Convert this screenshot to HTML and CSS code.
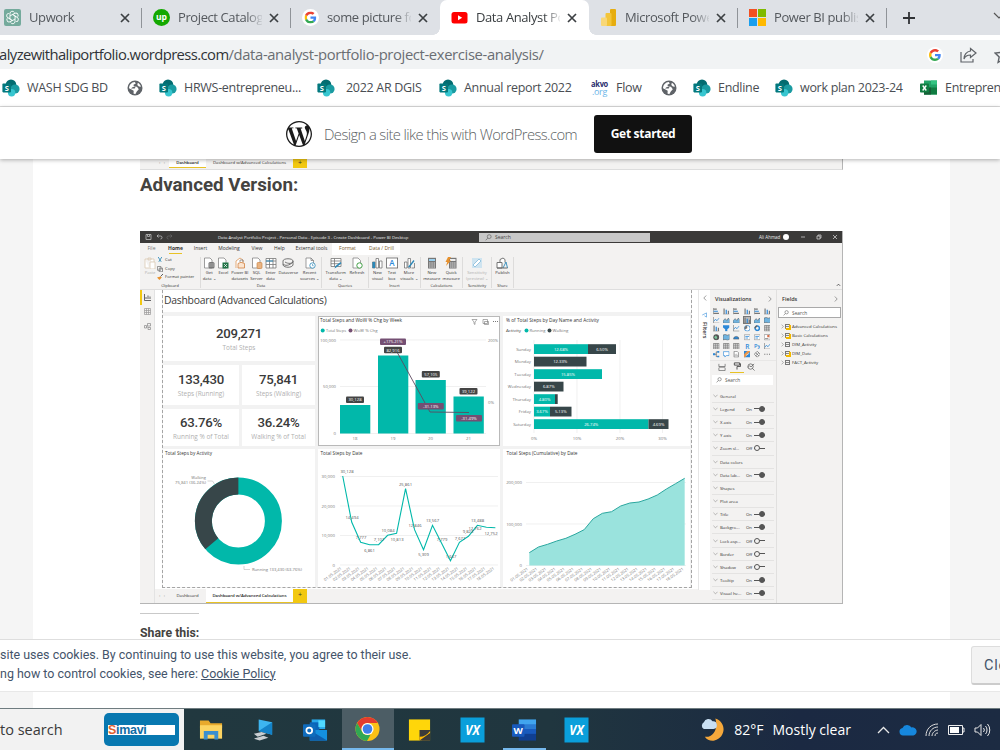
FILE: index.html
```html
<!DOCTYPE html>
<html lang="en">
<head>
    <meta charset="UTF-8">
    <meta name="viewport" content="width=device-width, initial-scale=1.0">
    <title>Data Analyst Portfolio Project</title>
    <link rel="stylesheet" href="styles.css">
</head>
<body>
    <svg class="defs" width="0" height="0">
        <symbol id="google" viewBox="0 0 48 48">
            <path fill="#ea4335" d="M24 9.5c3.54 0 6.71 1.22 9.21 3.6l6.85-6.85C35.9 2.38 30.47 0 24 0 14.62 0 6.51 5.38 2.56 13.22l7.98 6.19C12.43 13.72 17.74 9.5 24 9.5z"/>
            <path fill="#4285f4" d="M46.98 24.55c0-1.57-.15-3.09-.38-4.55H24v9.02h12.94c-.58 2.96-2.26 5.48-4.78 7.18l7.73 6c4.51-4.18 7.09-10.36 7.09-17.65z"/>
            <path fill="#fbbc05" d="M10.53 28.59c-.48-1.45-.76-2.99-.76-4.59s.27-3.14.76-4.59l-7.98-6.19C.92 16.46 0 20.12 0 24c0 3.88.92 7.54 2.56 10.78l7.97-6.19z"/>
            <path fill="#34a853" d="M24 48c6.48 0 11.93-2.13 15.89-5.81l-7.73-6c-2.15 1.45-4.92 2.3-8.16 2.3-6.26 0-11.57-4.22-13.47-9.91l-7.98 6.19C6.51 42.62 14.62 48 24 48z"/>
        </symbol>
        <symbol id="sharepoint" viewBox="0 0 18 18">
            <circle cx="9" cy="5.8" r="5.3" fill="#036c70"/>
            <circle cx="13" cy="10" r="4.6" fill="#1a9ba1"/>
            <circle cx="9.6" cy="13.8" r="3.7" fill="#37c6d0"/>
            <rect x="0.4" y="4.6" width="8.6" height="8.8" rx="0.8" fill="#03787c"/>
            <text x="4.7" y="11.6" text-anchor="middle" class="glyph" font-size="7.5">S</text>
        </symbol>
        <symbol id="globe" viewBox="0 0 16 16">
            <circle cx="8" cy="8" r="7.5" fill="#5f6368"/>
            <path fill="#fff" d="M2 8.200C2.200 4.800 4.500 2.300 7.800 2l1 1.500-2.300 1.300.3 1.700 3.200.2 1.800 2.500-2 2.300-1.500 2.700-1.800-.8.2-2.600-2.200-1.300z"/>
            <path fill="#5f6368" d="M4 8.500c1-1.500 2.500-2 4.500-1.200l-.8 1.200H5.500z"/>
            <path fill="#fff" d="M10.800 2.800c1.700.9 2.700 2.200 3.100 4l-2-.3-1.600-1.600z"/>
        </symbol>
        <symbol id="close" viewBox="0 0 10 10"><path d="M1 1l8 8M9 1l-8 8" stroke="#3c4043" stroke-width="1.700"/></symbol>
        <symbol id="chev-down" viewBox="0 0 6 4"><path d="M.5.5L3 3 5.500.5" fill="none" stroke="#777" stroke-width=".6"/></symbol>
        <symbol id="chev-right" viewBox="0 0 4 6"><path d="M.8.5L3.200 3 .8 5.500" fill="none" stroke="#777" stroke-width=".7"/></symbol>
        <symbol id="chev-left" viewBox="0 0 4 6"><path d="M3.200.5L.8 3l2.400 2.500" fill="none" stroke="#777" stroke-width=".7"/></symbol>
        <symbol id="lens" viewBox="0 0 8 8"><circle cx="4.800" cy="3" r="2.200" fill="none" stroke="#666" stroke-width=".8"/><path d="M3.200 4.700L.8 7.200" stroke="#666" stroke-width=".8"/></symbol>

        <!-- ribbon icons, 12 x 12 -->
        <symbol id="r-paste" viewBox="0 0 12 12"><path d="M1 2h9v3M1 2v9h4M6 5h5v7H6zM4 1h3v2H4z" fill="#fff" stroke="#d9c9b4" stroke-width=".8"/></symbol>
        <symbol id="r-get" viewBox="0 0 12 12"><path d="M1.500 1h5.500l2 2v8h-7.500z" fill="#fff" stroke="#777" stroke-width=".7"/><rect x="5.500" y="5" width="6" height="6.500" rx="1.500" fill="#777"/><path d="M6 7h5M6 9h5" stroke="#ddd" stroke-width=".5"/></symbol>
        <symbol id="r-excel" viewBox="0 0 12 12"><path d="M1.500 1h5.500l2 2v8h-7.500z" fill="#fff" stroke="#777" stroke-width=".7"/><rect x="5.500" y="5.500" width="6" height="6" fill="#217346"/><path d="M7 7l3 3M10 7l-3 3" stroke="#fff" stroke-width=".7"/></symbol>
        <symbol id="r-cube" viewBox="0 0 12 12"><path d="M2 11V4l4-3 3 2v3" fill="#fff" stroke="#e3a36b" stroke-width=".9"/><path d="M4 6.500l3-1.200 3.500 1.200V11H4z" fill="#fbe4cf" stroke="#d18241" stroke-width=".8"/><path d="M6 5V3h3v2" fill="none" stroke="#777" stroke-width=".7"/></symbol>
        <symbol id="r-sql" viewBox="0 0 12 12"><path d="M1.500 1h5.500l2 2v8h-7.500z" fill="#fff" stroke="#777" stroke-width=".7"/><rect x="6" y="5.500" width="5" height="6" rx="1" fill="#e9b483" stroke="#c77c35" stroke-width=".6"/></symbol>
        <symbol id="r-grid" viewBox="0 0 12 12"><path d="M1 1.500h10v9.500H1zM1 4h10M1 7.500h10M4.500 1.500V11M8 1.500V11" fill="#fff" stroke="#777" stroke-width=".8"/><path d="M1 4h7" stroke="#2b88b8" stroke-width="1"/></symbol>
        <symbol id="r-verse" viewBox="0 0 12 12"><path d="M1 4C1 1 11 1 11 4S6 7 3 5 M1 4v4c1 3 9 3 10 0V4M1 7c2 2 6 2 10-2" fill="none" stroke="#666" stroke-width=".9"/></symbol>
        <symbol id="r-doc" viewBox="0 0 12 12"><path d="M2 1h5l2.500 2.500V11H2zM7 1v2.500h2.500" fill="#fff" stroke="#777" stroke-width=".7"/><circle cx="8.500" cy="8.500" r="2.700" fill="#fff" stroke="#2b88b8" stroke-width=".8"/><path d="M8.500 7v1.700h1.200" fill="none" stroke="#2b88b8" stroke-width=".6"/></symbol>
        <symbol id="r-trans" viewBox="0 0 12 12"><path d="M1 1.500h10v8H1zM1 4h10M1 6.700h10M4.500 1.500v8" fill="#fff" stroke="#777" stroke-width=".8"/><path d="M4.500 11.500l1-2.500 5-4 1 1.200-5 4z" fill="#2b88b8"/></symbol>
        <symbol id="r-refresh" viewBox="0 0 12 12"><path d="M2 1h5l2.500 2.500V11H2z" fill="#fff" stroke="#777" stroke-width=".7"/><circle cx="8.500" cy="8.500" r="2.700" fill="#fff" stroke="#43a047" stroke-width="1"/></symbol>
        <symbol id="r-bars" viewBox="0 0 12 12"><path d="M1.500 11V5h2.500v6zM5 11V1.500h2.500V11zM8.500 11V4H11v7z" fill="#fff" stroke="#666" stroke-width=".7"/><path d="M1.500 11V5h2.500v6z" fill="#2b88b8"/></symbol>
        <symbol id="r-text" viewBox="0 0 12 12"><rect x=".6" y="1" width="11" height="10" fill="#fff" stroke="#666" stroke-width=".8"/><text x="6" y="9" text-anchor="middle" font-size="8" class="blue-glyph">A</text></symbol>
        <symbol id="r-more" viewBox="0 0 12 12"><path d="M1.500 11V5h2.500v6zM5 11V1.500h2.500V11z" fill="#fff" stroke="#666" stroke-width=".7"/><path d="M5 10l5.500-7 1 1-5 6.500z" fill="#2b88b8"/><path d="M8.500 11h3V6" fill="none" stroke="#666" stroke-width=".7"/></symbol>
        <symbol id="r-calc" viewBox="0 0 12 12"><path d="M2 .8h8v10.700H2z" fill="#777"/><path d="M3 2h6v2H3z" fill="#9cd1ef"/><path d="M3.200 6h5.800M3.200 8h5.800M3.200 10h5.800" stroke="#fff" stroke-width=".9" stroke-dasharray="1.300 .9"/></symbol>
        <symbol id="r-quick" viewBox="0 0 12 12"><path d="M4 .8h7.500v10.700H4z" fill="#777"/><path d="M5 2h5.500v2H5z" fill="#eee"/><path d="M5.200 6h5.300M5.200 8h5.300M5.200 10h5.300" stroke="#fff" stroke-width=".9" stroke-dasharray="1.300 .7"/><path d="M3 0h3L4 3.500h2L1 9l1.300-4H.5z" fill="#e8912d"/></symbol>
        <symbol id="r-sens" viewBox="0 0 12 12"><path d="M1 1h10v10H1z" fill="#cfe4f0"/><path d="M2 8l6-6 2 2-6 6z" fill="#fff" stroke="#8fc0dc" stroke-width=".9"/></symbol>
        <symbol id="r-pub" viewBox="0 0 12 12"><path d="M1 5.500h5V11H1zM4 5.500V2.500L7 1l2 1.500v3" fill="#fff" stroke="#666" stroke-width=".9"/><path d="M7 11l3-6 1.500 6" fill="none" stroke="#2b88b8" stroke-width=".9"/><path d="M1 11h10.500" stroke="#666"/></symbol>

        <!-- visual picker icons, 6 x 6 -->
        <symbol id="v-hbar" viewBox="0 0 6 6"><path d="M.3 0v6" stroke="#555" stroke-width=".5"/><path d="M.5 1h3M.5 5h5" stroke="#777" stroke-width="1.100"/><path d="M.5 3h4" stroke="#2b88d8" stroke-width="1.100"/></symbol>
        <symbol id="v-vbar" viewBox="0 0 6 6"><path d="M0 5.800h6" stroke="#555" stroke-width=".5"/><path d="M1 5.500v-5M5 5.500v-3" stroke="#777" stroke-width="1.100"/><path d="M3 5.500v-4" stroke="#2b88d8" stroke-width="1.100"/></symbol>
        <symbol id="v-line" viewBox="0 0 6 6"><path d="M.3 0v5.700H6" fill="none" stroke="#666" stroke-width=".6"/><path d="M.8 4l1.500-2 1.200 1.500L5.700 1" fill="none" stroke="#2b88d8" stroke-width=".7"/></symbol>
        <symbol id="v-area" viewBox="0 0 6 6"><path d="M0 5.700V3.500l2-2 1.500 1.700L5 1l1 1.500v3.200z" fill="#70b3df" stroke="#555" stroke-width=".5"/></symbol>
        <symbol id="v-pie" viewBox="0 0 6 6"><circle cx="3" cy="3" r="2.600" fill="#fff" stroke="#2b88d8" stroke-width=".7"/><path d="M3 3V.4A2.600 2.600 0 0 0 .7 4.200z" fill="#777"/></symbol>
        <symbol id="v-ring" viewBox="0 0 6 6"><circle cx="3" cy="3" r="2" fill="none" stroke="#2b88d8" stroke-width="1.400"/><path d="M3 1a2 2 0 0 0-2 2" fill="none" stroke="#666" stroke-width="1.400"/></symbol>
        <symbol id="v-table" viewBox="0 0 6 6"><path d="M.3.5h5.400v5H.3zM.3 2h5.400M.3 3.800h5.400M2.100.5v5M3.900.5v5" fill="#fff" stroke="#666" stroke-width=".6"/></symbol>
        <symbol id="v-map" viewBox="0 0 6 6"><path d="M0 1l2-.6 2 .7L6 .5V5l-2 .7L2 5l-2 .6z" fill="#70b3df" stroke="#555" stroke-width=".5"/></symbol>
        <symbol id="v-funnel" viewBox="0 0 6 6"><path d="M0 .3h6v2L4 4v1.700H2V4L0 2.300z" fill="#2b88d8"/></symbol>
        <symbol id="v-globe" viewBox="0 0 6 6"><circle cx="3" cy="3" r="2.700" fill="#555"/><path d="M1 3l1.500-1.700L4 3 3 5z" fill="#7cc59c"/></symbol>
        <symbol id="v-gauge" viewBox="0 0 6 6"><path d="M.5 4.700a2.500 2.500 0 0 1 5 0z" fill="#2b88d8" stroke="#555" stroke-width=".5"/></symbol>
        <symbol id="v-card" viewBox="0 0 6 6"><path d="M.3.7h5.400v4.600H.3z" fill="#fff" stroke="#777" stroke-width=".5"/><path d="M1.200 2.300h3.500M1.200 3.700h2.500" stroke="#2b88d8" stroke-width=".7"/></symbol>
        <symbol id="v-kpi" viewBox="0 0 6 6"><path d="M.3.5h5.400v5H.3z" fill="#fff" stroke="#777" stroke-width=".5"/><path d="M3 1h2v2H3z" fill="#d8704b"/><path d="M1 4.300h3" stroke="#666" stroke-width=".7"/></symbol>
        <symbol id="v-r" viewBox="0 0 6 6"><text x="3" y="5.300" text-anchor="middle" font-size="6" class="blue-glyph">R</text></symbol>
        <symbol id="v-py" viewBox="0 0 6 6"><text x="3" y="5" text-anchor="middle" font-size="5.200" class="blue-glyph">Py</text></symbol>
        <symbol id="v-tree" viewBox="0 0 6 6"><path d="M0 3h3M3 .8v4.400M3 .8h2M3 5.200h2" stroke="#555" stroke-width=".6" fill="none"/><path d="M0 2h2v2H0zM4 0h2v1.700H4zM4 4.300h2V6H4z" fill="#2b88d8"/></symbol>
        <symbol id="v-chat" viewBox="0 0 6 6"><path d="M.4.6h5.200v3.600H3L1.700 5.600V4.200H.4z" fill="#fff" stroke="#2b88d8" stroke-width=".6"/></symbol>
        <symbol id="v-doc" viewBox="0 0 6 6"><path d="M1 .3h2.800L5 1.500v4.200H1z" fill="#fff" stroke="#666" stroke-width=".6"/><path d="M2 3v2M3 2.500V5M4 3.500V5" stroke="#666" stroke-width=".4"/></symbol>
        <symbol id="v-arc" viewBox="0 0 6 6"><path d="M0 0h6v6H0z" fill="#2b88d8"/><path d="M0 3l3-3h3L1 6H0z" fill="#e9964b"/><path d="M2 4l3-2" stroke="#fff" stroke-width=".6"/></symbol>
        <symbol id="v-diamond" viewBox="0 0 6 6"><path d="M3 .3L5.700 3 3 5.700.3 3zM1.600 1.700l2.800 2.700M4.400 1.700L1.600 4.400" fill="#fff" stroke="#555" stroke-width=".6"/></symbol>
        <symbol id="v-dots" viewBox="0 0 6 6"><path d="M.3 3h5.400" stroke="#555" stroke-width=".8" stroke-dasharray=".9 1.300"/></symbol>
    </svg>

    <!-- Browser tabs -->
    <div class="tab-strip">
        <div class="tab">
            <svg width="17" height="17" viewBox="0 0 17 17"><rect width="17" height="17" rx="2" fill="#74aa9c"/><g fill="none" stroke="#fff" stroke-width=".9"><path id="petal" d="M8.500 5.500L6 7V4.500a2.300 2.300 0 0 1 4.400-.9"/><use href="#petal" transform="rotate(60 8.500 8.500)"/><use href="#petal" transform="rotate(120 8.500 8.500)"/><use href="#petal" transform="rotate(180 8.500 8.500)"/><use href="#petal" transform="rotate(240 8.500 8.500)"/><use href="#petal" transform="rotate(300 8.500 8.500)"/></g></svg>
            <span class="tab-title">Upwork</span>
            <svg class="tab-close"><use href="#close"/></svg>
        </div>
        <div class="tab">
            <svg width="17" height="17" viewBox="0 0 17 17"><circle cx="8.500" cy="8.500" r="8.500" fill="#14a800"/><text x="8.500" y="11" text-anchor="middle" class="glyph" font-size="8.500">up</text></svg>
            <span class="tab-title">Project Catalog</span>
            <svg class="tab-close"><use href="#close"/></svg>
        </div>
        <div class="tab no-sep">
            <svg width="17" height="17" viewBox="0 0 17 17"><circle cx="8.500" cy="8.500" r="8.500" fill="#fff"/><use href="#google" x="2.500" y="2.500" width="12" height="12"/></svg>
            <span class="tab-title">some picture for</span>
            <svg class="tab-close"><use href="#close"/></svg>
        </div>
        <div class="tab active">
            <svg width="17" height="17" viewBox="0 0 17 17"><rect x=".5" y="3" width="16" height="11.500" rx="2.500" fill="#f00"/><path d="M7 6.200v5l4.200-2.500z" fill="#fff"/></svg>
            <span class="tab-title">Data Analyst Port</span>
            <svg class="tab-close"><use href="#close"/></svg>
        </div>
        <div class="tab">
            <svg width="17" height="17" viewBox="0 0 17 17"><rect x="10" y="0" width="6" height="17" rx="1" fill="#e6ad10"/><rect x="5.500" y="4" width="6" height="13" rx="1" fill="#f3c53a"/><rect x="1" y="8.500" width="6" height="8.500" rx="1" fill="#f8d777"/></svg>
            <span class="tab-title">Microsoft Power</span>
            <svg class="tab-close"><use href="#close"/></svg>
        </div>
        <div class="tab">
            <svg width="17" height="17" viewBox="0 0 17 17"><path fill="#f25022" d="M0 0h8v8H0z"/><path fill="#7fba00" d="M9 0h8v8H9z"/><path fill="#1a9fee" d="M0 9h8v8H0z"/><path fill="#ffb900" d="M9 9h8v8H9z"/></svg>
            <span class="tab-title">Power BI publish</span>
            <svg class="tab-close"><use href="#close"/></svg>
        </div>
        <svg class="new-tab" viewBox="0 0 12 12"><path d="M6 0v12M0 6h12" stroke="#303236" stroke-width="1.800"/></svg>
        <svg class="tab-search" viewBox="0 0 12 8"><path d="M1 1l5 5 5-5" fill="none" stroke="#555" stroke-width="1.200"/></svg>
    </div>

    <!-- Address bar -->
    <div class="address-bar">
        <div class="url"><span class="host">alyzewithaliportfolio.wordpress.com</span><span class="path">/data-analyst-portfolio-project-exercise-analysis/</span></div>
        <div class="address-icons">
            <svg width="16" height="16" viewBox="0 0 16 16"><circle cx="8" cy="8" r="8" fill="#fff"/><use href="#google" x="2" y="2" width="12" height="12"/></svg>
            <svg width="17" height="16" viewBox="0 0 17 16" fill="none" stroke="#5f6368" stroke-width="1.200"><path d="M1 5v10h12v-3M10.500 1.500l5.500 4.500-5.500 4.500V8C7 8 5 9.500 4 12c0-4 2.500-7.500 6.500-8z"/></svg>
            <svg width="18" height="18" viewBox="0 0 18 18" fill="none" stroke="#5f6368" stroke-width="1.400"><path d="M9 1.500l2.300 5 5.500.6-4 3.800 1.100 5.500L9 13.600l-4.900 2.800 1.100-5.500-4-3.800 5.500-.6z"/></svg>
        </div>
    </div>

    <!-- Bookmarks -->
    <div class="bookmarks">
        <a class="bookmark"><svg><use href="#sharepoint"/></svg><span>WASH SDG BD</span></a>
        <a class="bookmark globe"><svg><use href="#globe"/></svg></a>
        <a class="bookmark"><svg><use href="#sharepoint"/></svg><span>HRWS-entrepreneu...</span></a>
        <a class="bookmark wide"><svg><use href="#sharepoint"/></svg><span>2022 AR DGIS</span></a>
        <a class="bookmark"><svg><use href="#sharepoint"/></svg><span>Annual report 2022</span></a>
        <a class="bookmark"><svg viewBox="0 0 18 18"><text x="0" y="8" font-size="8" textLength="17" lengthAdjust="spacingAndGlyphs" class="akvo">akvo</text><text x="1" y="15.500" font-size="8.500" textLength="15" lengthAdjust="spacingAndGlyphs" class="akvo-org">.org</text></svg><span>Flow</span></a>
        <a class="bookmark globe"><svg><use href="#globe"/></svg></a>
        <a class="bookmark"><svg><use href="#sharepoint"/></svg><span>Endline</span></a>
        <a class="bookmark"><svg><use href="#sharepoint"/></svg><span>work plan 2023-24</span></a>
        <a class="bookmark"><svg viewBox="0 0 18 18"><path fill="#21a366" d="M4 1.500h13v14H4z"/><path fill="#107c41" d="M4 8.500h13v7H4z"/><path fill="#185c37" d="M4 8.500h7v7H4z"/><path fill="#33c481" d="M11 1.500h6v4h-6z"/><rect y="4.500" width="9" height="9" rx=".8" fill="#107c41"/><path d="M2.700 6.500l3.600 5M6.300 6.500l-3.600 5" stroke="#fff" stroke-width="1.300"/></svg><span>Entrepreneurs</span></a>
    </div>

    <!-- WordPress banner -->
    <div class="banner">
        <svg class="wp-logo" viewBox="0 0 24 24"><path fill="#1b1b1b" d="M21.469 6.825c.84 1.537 1.318 3.300 1.318 5.175 0 3.979-2.156 7.456-5.363 9.325l3.295-9.527c.615-1.540.82-2.771.82-3.864 0-.405-.026-.78-.07-1.110m-7.981.105c.647-.03 1.232-.105 1.232-.105.582-.075.514-.93-.067-.899 0 0-1.755.135-2.880.135-1.064 0-2.850-.15-2.850-.15-.585-.03-.661.855-.075.885 0 0 .54.061 1.125.09l1.680 4.605-2.370 7.080L5.354 6.900c.649-.03 1.234-.1 1.234-.1.585-.075.516-.93-.065-.896 0 0-1.746.138-2.874.138-.2 0-.438-.008-.69-.015C4.911 3.150 8.235 1.215 12 1.215c2.809 0 5.365 1.072 7.286 2.833-.046-.003-.091-.009-.141-.009-1.060 0-1.812.923-1.812 1.914 0 .89.513 1.643 1.060 2.531.411.72.89 1.643.89 2.977 0 .915-.354 1.994-.821 3.479l-1.075 3.585-3.900-11.610.001.014zM12 22.784c-1.059 0-2.081-.153-3.048-.437l3.237-9.406 3.315 9.087c.024.053.05.101.078.149-1.120.393-2.325.609-3.582.609M1.211 12c0-1.564.336-3.050.935-4.390L7.290 21.709C3.694 19.960 1.212 16.271 1.211 12M12 0C5.385 0 0 5.385 0 12s5.385 12 12 12 12-5.385 12-12S18.615 0 12 0"/></svg>
        <span class="banner-text">Design a site like this with WordPress.com</span>
        <a class="banner-button">Get started</a>
    </div>

    <!-- Page -->
    <div class="page">
        <div class="article">
            <div class="sheet-tabs cut">
                <span class="sheet-nav">‹ &nbsp; ›</span>
                <span class="sheet first selected">Dashboard</span>
                <span class="sheet second">Dashboard w/Advanced Calculations</span>
                <span class="sheet-add">+</span>
            </div>
            <h3>Advanced Version:</h3>

            <div class="powerbi">
                <div class="pbi-title">
                    <svg class="quick-tools" viewBox="0 0 30 8" fill="none" stroke="#bbb" stroke-width=".8"><path d="M1 1.500h5v5H1zM2.500 1.500v2h2v-2M12 3h3.500a1.500 1.500 0 0 1 0 3M13.500 1.500L12 3l1.500 1.500"/><path d="M27 3h-3.500a1.500 1.500 0 0 0 0 3M25.500 1.500L27 3l-1.500 1.500" stroke="#666"/></svg>
                    <span class="pbi-name">Data Analyst Portfolio Project - Personal Data - Episode 3 - Create Dashboard - Power BI Desktop</span>
                    <span class="pbi-search"><svg><use href="#lens"/></svg>Search</span>
                    <span class="pbi-user">Ali Ahmad</span>
                    <span class="avatar"></span>
                    <svg class="win-buttons" viewBox="0 0 42 8" fill="none" stroke="#ddd" stroke-width=".7"><path d="M3 4h4M19 3h3v3h-3zM20 3V2h3v3h-1M35 2l4 4M39 2l-4 4"/></svg>
                </div>
                <div class="ribbon-tabs">
                    <span class="rt-file">File</span><span class="current">Home</span><span>Insert</span><span>Modeling</span><span>View</span><span>Help</span><span>External tools</span><span class="lit">Format</span><span class="lit">Data / Drill</span>
                </div>
                <div class="ribbon">
                    <div class="group clipboard">
                        <div class="tools">
                            <div class="tool off"><svg><use href="#r-paste"/></svg>Paste</div>
                            <div class="clip-list">
                                <span><svg viewBox="0 0 5 5"><path d="M1 0l2.500 4M4 0L1.500 4" stroke="#2b88b8" stroke-width=".7"/></svg>Cut</span>
                                <span><svg viewBox="0 0 5 5"><path d="M.3.5h3v3h-3zM1.800 1.800h2.800v3H1.800z" fill="#fff" stroke="#666" stroke-width=".6"/></svg>Copy</span>
                                <span><svg viewBox="0 0 5 5"><path d="M0 3l3-1 1 1-2 2z" fill="#e8912d"/><path d="M3 2l2-2" stroke="#555" stroke-width=".8"/></svg>Format painter</span>
                            </div>
                        </div>
                        <div class="group-name">Clipboard</div>
                    </div>
                    <div class="group data">
                        <div class="tools">
                            <div class="tool"><svg><use href="#r-get"/></svg>Get<br>data ⌄</div>
                            <div class="tool"><svg><use href="#r-excel"/></svg>Excel</div>
                            <div class="tool"><svg><use href="#r-cube"/></svg>Power BI<br>datasets</div>
                            <div class="tool"><svg><use href="#r-sql"/></svg>SQL<br>Server</div>
                            <div class="tool"><svg><use href="#r-grid"/></svg>Enter<br>data</div>
                            <div class="tool"><svg><use href="#r-verse"/></svg>Dataverse</div>
                            <div class="tool"><svg><use href="#r-doc"/></svg>Recent<br>sources ⌄</div>
                        </div>
                        <div class="group-name">Data</div>
                    </div>
                    <div class="group queries">
                        <div class="tools">
                            <div class="tool"><svg><use href="#r-trans"/></svg>Transform<br>data ⌄</div>
                            <div class="tool"><svg><use href="#r-refresh"/></svg>Refresh</div>
                        </div>
                        <div class="group-name">Queries</div>
                    </div>
                    <div class="group insert">
                        <div class="tools">
                            <div class="tool"><svg><use href="#r-bars"/></svg>New<br>visual</div>
                            <div class="tool"><svg><use href="#r-text"/></svg>Text<br>box</div>
                            <div class="tool"><svg><use href="#r-more"/></svg>More<br>visuals ⌄</div>
                        </div>
                        <div class="group-name">Insert</div>
                    </div>
                    <div class="group calc">
                        <div class="tools">
                            <div class="tool"><svg><use href="#r-calc"/></svg>New<br>measure</div>
                            <div class="tool"><svg><use href="#r-quick"/></svg>Quick<br>measure</div>
                        </div>
                        <div class="group-name">Calculations</div>
                    </div>
                    <div class="group sens">
                        <div class="tools"><div class="tool off"><svg><use href="#r-sens"/></svg>Sensitivity<br>(preview) ⌄</div></div>
                        <div class="group-name">Sensitivity</div>
                    </div>
                    <div class="group share">
                        <div class="tools"><div class="tool"><svg><use href="#r-pub"/></svg>Publish</div></div>
                        <div class="group-name">Share</div>
                    </div>
                    <svg class="collapse" viewBox="0 0 6 4"><path d="M1 3l2-2 2 2" fill="none" stroke="#333" stroke-width=".9"/></svg>
                </div>

                <div class="workspace">
                    <div class="view-rail">
                        <span class="rail-item on"><svg viewBox="0 0 7 7"><path d="M.5 0v6.500H7M2 5V3M4 5V1.500M6 5V2.500" fill="none" stroke="#555" stroke-width=".9"/></svg></span>
                        <span class="rail-item"><svg viewBox="0 0 7 7"><path d="M.5.5h6v6h-6zM.5 2.500h6M.5 4.500h6M2.500.5v6M4.500.5v6" fill="none" stroke="#999" stroke-width=".7"/></svg></span>
                        <span class="rail-item"><svg viewBox="0 0 7 7"><path d="M3.500.5h3v2.500h-3zM.5 2.500h2V5h-2zM4 4.500h2.500v2H4zM2.500 4h1.500" fill="none" stroke="#888" stroke-width=".7"/></svg></span>
                    </div>
                    <div class="canvas-col">
                        <div class="canvas">
                            <div class="report">
                                <div class="report-title">Dashboard (Advanced Calculations)</div>
                                <div class="tiles">
                                    <div class="kpis">
                                        <div class="kpi full"><b>209,271</b><span>Total Steps</span></div>
                                        <div class="kpi"><b>133,430</b><span>Steps (Running)</span></div>
                                        <div class="kpi"><b>75,841</b><span>Steps (Walking)</span></div>
                                        <div class="kpi"><b>63.76%</b><span>Running % of Total</span></div>
                                        <div class="kpi"><b>36.24%</b><span>Walking % of Total</span></div>
                                    </div>
                                    <svg class="tile picked" id="weekChart" viewBox="318 316 182 130"></svg>
                                    <svg class="tile" id="dayChart" viewBox="503 316 187 130"></svg>
                                    <svg class="tile" id="activityChart" viewBox="163 449 152 138"></svg>
                                    <svg class="tile" id="dateChart" viewBox="318 449 182 138"></svg>
                                    <svg class="tile" id="totalChart" viewBox="503 449 187 138"></svg>
                                </div>
                            </div>
                        </div>
                        <div class="sheet-tabs">
                            <span class="sheet-nav">‹ &nbsp; ›</span>
                            <span class="sheet first">Dashboard</span>
                            <span class="sheet second selected">Dashboard w/Advanced Calculations</span>
                            <span class="sheet-add">+</span>
                        </div>
                    </div>
                    <div class="filters">
                        <svg class="arrow"><use href="#chev-left"/></svg>
                        <svg class="cone" viewBox="0 0 6 6"><path d="M.3 3L5.500.5v5L3 4" fill="none" stroke="#2b88d8" stroke-width=".7"/></svg>
                        <span>Filters</span>
                    </div>
                    <div class="visuals">
                        <div class="pane-head">Visualizations<svg><use href="#chev-right"/></svg></div>
                        <div class="picker" id="picker"></div>
                        <div class="modes">
                            <span><svg viewBox="0 0 9 9"><path d="M1 1v3h7V1M1 5.500v3h7v-3M1 4.700h7" fill="none" stroke="#666" stroke-width=".8"/></svg></span>
                            <span class="on"><svg viewBox="0 0 9 9"><path d="M1.500 1h6v2.500h-6zM7.500 2h1v3h-4v3.500" fill="none" stroke="#444" stroke-width="1"/></svg></span>
                            <span><svg viewBox="0 0 9 9"><circle cx="4" cy="4" r="3" fill="none" stroke="#555" stroke-width=".8"/><path d="M6 6l2.500 2.500M1 5l2-2 1.500 1.500L8 1" fill="none" stroke="#555" stroke-width=".8"/></svg></span>
                        </div>
                        <div class="pane-search"><svg><use href="#lens"/></svg>Search</div>
                        <div class="settings" id="settings"></div>
                    </div>
                    <div class="fields">
                        <div class="pane-head">Fields<svg><use href="#chev-right"/></svg></div>
                        <div class="pane-search boxed"><svg><use href="#lens"/></svg>Search</div>
                        <div class="field"><svg><use href="#chev-right"/></svg><i class="calc"></i>Advanced Calculations</div>
                        <div class="field"><svg><use href="#chev-right"/></svg><i class="calc"></i>Basic Calculations</div>
                        <div class="field"><svg><use href="#chev-right"/></svg><i></i>DIM_Activity</div>
                        <div class="field"><svg><use href="#chev-right"/></svg><i class="calc"></i>DIM_Date</div>
                        <div class="field"><svg><use href="#chev-right"/></svg><i></i>FACT_Activity</div>
                    </div>
                </div>
            </div>

            <div class="rule"></div>
            <h4>Share this:</h4>
        </div>
    </div>

    <!-- Cookie notice -->
    <div class="cookies">
        <p>site uses cookies. By continuing to use this website, you agree to their use.<br>ng how to control cookies, see here: <a>Cookie Policy</a></p>
        <button>Close and accept</button>
    </div>
    <div class="page-end"><div></div></div>

    <!-- Taskbar -->
    <div class="taskbar">
        <div class="search-box">
            <span>to search</span>
            <span class="simavi"><b><i>S</i>imavi</b></span>
        </div>
        <div class="apps">
            <span class="app"><svg viewBox="0 0 26 26"><path fill="#e8a92c" d="M1 3h9l2 3h12v5H1z"/><path fill="#fcd462" d="M1 8h23v14H1z"/><path fill="#3a8fd0" d="M5 23v-9h15v9h-4v-5H9v5z"/></svg></span>
            <span class="app"><svg viewBox="0 0 26 26"><path fill="#3db5f0" d="M8 2l14 3v13L8 14z"/><path fill="#1483c9" d="M8 14L22 5v13z"/><path fill="#c9ced2" d="M3 17l8-2 5 2-9 3zM3 22l10-3 5 2-9 3z"/></svg></span>
            <span class="app"><svg viewBox="0 0 26 26"><path fill="#28a8ea" d="M9 2h14v10H9z"/><path fill="#0a64b8" d="M7 5h10v9H7z"/><path fill="#1490df" d="M7 13h18v11H7z"/><path fill="#50d9ff" d="M16 3h7v7h-7z"/><path fill="#0f5fae" d="M7 13l18 11H7z"/><rect y="7" width="13" height="13" rx="1" fill="#0f6cbd"/><circle cx="6.500" cy="13.500" r="3" fill="none" stroke="#fff" stroke-width="1.800"/></svg></span>
            <span class="app active"><svg viewBox="0 0 26 26"><circle cx="13" cy="13" r="12.500" fill="#fbc116"/><path fill="#e33b2e" d="M2.200 6.700A12.500 12.500 0 0 1 23.800 6.700H13A6.300 6.300 0 0 0 7.500 16z"/><path fill="#31a853" d="M2.200 6.700L7.500 16A6.300 6.300 0 0 0 13 19.300h3L12.500 25.500A12.500 12.500 0 0 1 2.200 6.700z"/><circle cx="13" cy="13" r="6.300" fill="#fff"/><circle cx="13" cy="13" r="5" fill="#3f7ee8"/></svg></span>
            <span class="app"><svg viewBox="0 0 26 26"><path fill="#ffd60a" d="M2 2h22v22H2z"/><path fill="#3a3a3a" d="M13 13h11v11H13z"/><path fill="#ffb900" d="M13 24v-4c5 0 8-2 11-6v2z"/><path fill="#3a3a3a" d="M15 24l9-7v7z"/></svg></span>
            <span class="app"><svg viewBox="0 0 26 26"><path fill="#0a9fdb" d="M.5 0h25v26H.5z"/><text x="13" y="18" font-size="14" text-anchor="middle" textLength="15" lengthAdjust="spacingAndGlyphs" class="vx">VX</text></svg></span>
            <span class="app open"><svg viewBox="0 0 26 26"><path fill="#41a5ee" d="M7 2h18v6H7z"/><path fill="#2b7cd3" d="M7 7h18v6H7z"/><path fill="#185abd" d="M7 12h18v6H7z"/><path fill="#103f91" d="M7 17h18v7H7z"/><rect y="7" width="13" height="13" rx="1" fill="#185abd"/><text x="6.500" y="17" font-size="10" text-anchor="middle" class="glyph">W</text></svg></span>
            <span class="app"><svg viewBox="0 0 26 26"><path fill="#0a9fdb" d="M.5 0h25v26H.5z"/><text x="13" y="18" font-size="14" text-anchor="middle" textLength="15" lengthAdjust="spacingAndGlyphs" class="vx">VX</text></svg></span>
        </div>
        <div class="weather">
            <svg viewBox="0 0 26 26"><path fill="#f5a83b" d="M16 1c12 4 11 20-1 23-4 .8-8-1-10-4 9 1 14-8 11-19z"/><path fill="#c9dff2" d="M4 12a4 4 0 0 1 0-7 5 5 0 0 1 9-1 4 4 0 0 1 1 8z"/></svg>
            <span>82°F</span><span>Mostly clear</span>
        </div>
        <div class="tray">
            <svg width="13" height="8" viewBox="0 0 13 8"><path d="M1 7l5.500-5.500L12 7" fill="none" stroke="#e8e8e8" stroke-width="1.300"/></svg>
            <svg width="18" height="12" viewBox="0 0 18 12"><path d="M4 11.500A3.800 3.800 0 0 1 3.500 4 5 5 0 0 1 12.500 3.500 4 4 0 0 1 14.500 11.500z" fill="#1687dd"/></svg>
            <svg width="14" height="14" viewBox="0 0 14 14" fill="none" stroke="#ddd"><path d="M1 13C1 6 6 1 13 1M4 13c0-5 4-9 9-9M7 13c0-3 3-6 6-6M10 13c0-2 1-3 3-3"/></svg>
            <svg width="17" height="10" viewBox="0 0 17 10"><path d="M.5.5h14v9H.5zM14.500 3H16v4h-1.500" fill="none" stroke="#eee"/><path d="M2 2h9v6H2z" fill="#fff"/></svg>
            <svg width="17" height="14" viewBox="0 0 17 14" fill="none" stroke="#e8e8e8"><path d="M1 5h2.500L7 1.500v11L3.500 9H1zM9.500 5a3 3 0 0 1 0 4M11.500 3a6 6 0 0 1 0 8M13.500 1a9 9 0 0 1 0 12"/></svg>
        </div>
    </div>

    <script src="script.js"></script>
</body>
</html>
```
FILE: styles.css
```css
* {
    box-sizing: border-box;
}
body {
    margin: 0;
    width: 1000px;
    height: 750px;
    overflow: hidden;
    display: flex;
    flex-direction: column;
    background-color: #ffffff;
    font-family: "Open Sans", "Noto Sans", sans-serif;
    color: #3c4043;
}
svg {
    display: block;
    flex: none;
}
.defs {
    position: absolute;
}
.glyph {
    fill: #ffffff;
    font-family: "Open Sans", sans-serif;
    font-weight: bold;
}
.blue-glyph {
    fill: #2b88d8;
    font-family: "Open Sans", sans-serif;
    font-weight: 600;
}

/* Browser tabs */
.tab-strip {
    display: flex;
    align-items: center;
    height: 35px;
    flex: none;
    background-color: #dee1e6;
    overflow: hidden;
}
.tab {
    display: flex;
    align-items: center;
    flex: none;
    width: 149px;
    height: 35px;
    padding-left: 11px;
    position: relative;
}
.tab:first-child {
    margin-left: -7px;
}
.tab::after {
    content: "";
    position: absolute;
    right: 0;
    top: 8px;
    width: 1px;
    height: 20px;
    background-color: #8f9398;
}
.tab.no-sep::after {
    display: none;
}
.tab.active {
    background-color: #ffffff;
    border-radius: 7px 7px 0 0;
}
/* flared corners at the foot of the open tab */
.tab.active::before,
.tab.active::after {
    content: "";
    position: absolute;
    top: auto;
    bottom: 0;
    width: 7px;
    height: 7px;
    z-index: 1;
}
.tab.active::before {
    left: -7px;
    background: radial-gradient(circle at 0 0, #dee1e6 6.500px, #ffffff 7px);
}
.tab.active::after {
    right: -7px;
    background: radial-gradient(circle at 100% 0, #dee1e6 6.500px, #ffffff 7px);
}
.tab.active .tab-title {
    color: #3c4043;
}
.tab-title {
    width: 84px;
    margin-left: 8px;
    padding-bottom: 1px;
    font-size: 13px;
    letter-spacing: -0.400px;
    white-space: nowrap;
    overflow: hidden;
    color: #54585d;
    mask-image: linear-gradient(to right, #000 68px, transparent 86px);
}
.tab-close {
    width: 10px;
    height: 10px;
    margin-left: 7px;
}
.new-tab {
    width: 12px;
    height: 12px;
    margin-left: 16px;
}
.tab-search {
    width: 12px;
    height: 8px;
    margin-left: 78px;
    margin-bottom: 4px;
}

/* Address bar */
.address-bar {
    display: flex;
    justify-content: space-between;
    align-items: center;
    flex: none;
    height: 29px;
    margin-top: 5px;
    background-color: #f1f3f4;
}
.url {
    margin-left: -1px;
    padding-bottom: 1px;
    font-size: 14.800px;
    white-space: nowrap;
}
.host {
    letter-spacing: -0.580px;
    color: #303338;
}
.path {
    letter-spacing: -0.370px;
    color: #6a6e73;
}
.address-icons {
    display: flex;
    align-items: center;
    gap: 17px;
    margin-right: -12px;
}

/* Bookmarks */
.bookmarks {
    display: grid;
    grid-template-columns: 125px 32px 158px 122px 152px 70px 32px 82px 145px 120px;
    align-items: center;
    flex: none;
    height: 38px;
    padding-left: 2px;
    border-bottom: 1px solid #dcdcdc;
    overflow: hidden;
}
.bookmark {
    display: flex;
    align-items: center;
    gap: 7px;
    font-size: 12.500px;
    letter-spacing: -0.300px;
    white-space: nowrap;
    color: #4a4e53;
}
.bookmark.wide {
    gap: 11px;
}
.bookmark svg {
    width: 18px;
    height: 18px;
}
.bookmark.globe svg {
    width: 16px;
    height: 16px;
}
.akvo {
    fill: #2c2e6e;
    font-weight: bold;
}
.akvo-org {
    fill: #6cb5e8;
}

/* WordPress banner */
.banner {
    display: flex;
    align-items: center;
    flex: none;
    height: 52px;
    padding: 1px 0 0 286px;
    background-color: #ffffff;
    box-shadow: 0 1px 4px rgba(0, 0, 0, 0.3);
    position: relative;
    z-index: 1;
}
.wp-logo {
    width: 26px;
    height: 26px;
}
.banner-text {
    width: 254px;
    margin: 0 16px 0 12px;
    font-size: 14.800px;
    font-weight: 300;
    letter-spacing: -0.600px;
    white-space: nowrap;
    color: #5c5f63;
}
.banner-button {
    width: 98px;
    height: 38px;
    line-height: 38px;
    border-radius: 3px;
    background-color: #111111;
    color: #ffffff;
    font-size: 12px;
    font-weight: 700;
    letter-spacing: -0.300px;
    text-align: center;
}

/* Article */
.page {
    flex: none;
    height: 480px;
    padding: 0 50px 0 33px;
    background-color: #f5f5f5;
    overflow: hidden;
}
.article {
    height: 480px;
    padding-left: 107px;
    background-color: #ffffff;
    font-family: Roboto, sans-serif;
}
h3 {
    height: 61px;
    margin: 0;
    padding-top: 4px;
    font-size: 18.800px;
    line-height: 23px;
    font-weight: 700;
    color: #444340;
}
h4 {
    margin: 12px 0 0;
    font-size: 12.300px;
    line-height: 14px;
    font-weight: 700;
    color: #444340;
}
.rule {
    width: 59px;
    height: 1px;
    margin-top: 9px;
    background-color: #c9c9c9;
}

/* Power BI window */
.powerbi {
    width: 703px;
    height: 373px;
    border: 1px solid #b5b5b5;
    border-width: 0 1px 1px 0;
    background-color: #f3f2f1;
    font-family: "Open Sans", sans-serif;
    font-size: 4.500px;
    line-height: 6px;
    white-space: nowrap;
    color: #333333;
    overflow: hidden;
}
.pbi-title {
    display: flex;
    align-items: center;
    height: 12px;
    background-color: #3b3a39;
    color: #eeeeee;
}
.quick-tools {
    width: 30px;
    height: 8px;
    margin-left: 5px;
}
.pbi-name {
    width: 261px;
    padding-left: 43px;
    font-size: 4.250px;
}
.pbi-search {
    display: flex;
    align-items: center;
    gap: 3px;
    width: 171px;
    height: 9px;
    margin-left: 43px;
    padding-left: 6px;
    background-color: #c8c8c8;
    color: #444444;
    font-size: 5px;
}
.pbi-search svg {
    width: 7px;
    height: 7px;
}
.pbi-user {
    width: 22px;
    margin-left: 109px;
    font-size: 4.500px;
}
.avatar {
    width: 6px;
    height: 6px;
    margin-left: 2px;
    border-radius: 50%;
    background-color: #ffffff;
}
.win-buttons {
    width: 42px;
    height: 8px;
    margin-left: 9px;
}
.ribbon-tabs {
    display: grid;
    grid-template-columns: 21px 27px 23px 34px 22px 23px 41px 31px 37px;
    height: 12px;
    padding-left: 1px;
    line-height: 11px;
    font-size: 5px;
    text-align: center;
}
.ribbon-tabs .rt-file {
    color: #777777;
}
.ribbon-tabs .current {
    font-weight: 700;
    background: linear-gradient(#e8c224, #e8c224) center bottom 1px / 13px 1px no-repeat;
}
.ribbon-tabs .lit {
    background-color: #ffffff;
    color: #7a5c2e;
}
.ribbon {
    display: flex;
    height: 35px;
    padding-top: 2px;
    border-bottom: 1px solid #dedede;
}
.group {
    display: flex;
    flex-direction: column;
    justify-content: space-between;
    flex: none;
    height: 31px;
    border-right: 1px solid #dddcdb;
}
.group.clipboard { width: 61px; }
.group.data { width: 121px; }
.group.queries { width: 47px; }
.group.insert { width: 52px; }
.group.calc { width: 42px; }
.group.sens { width: 29px; }
.group.share { width: 22px; }
.tools {
    display: flex;
    justify-content: space-evenly;
}
.clipboard .tools {
    justify-content: flex-start;
    gap: 1px;
    padding-left: 4px;
}
.tool {
    display: flex;
    flex-direction: column;
    align-items: center;
    font-size: 4.200px;
    line-height: 5.700px;
    text-align: center;
}
.tool.off {
    color: #b0b0b0;
}
.tool svg {
    width: 12px;
    height: 12px;
    margin-bottom: 1px;
}
.clip-list {
    display: flex;
    flex-direction: column;
    gap: 2.500px;
    font-size: 4.200px;
}
.clip-list span {
    display: flex;
    align-items: center;
    gap: 2px;
}
.clip-list svg {
    width: 6px;
    height: 6px;
}
.group-name {
    font-size: 3.900px;
    line-height: 5px;
    text-align: center;
}
.collapse {
    width: 5px;
    height: 4px;
    margin: 26px 1px 0 auto;
}

/* Workspace */
.workspace {
    display: flex;
    height: 313px;
}
.view-rail {
    flex: none;
    width: 15px;
    border-right: 1px solid #e3e3e3;
}
.rail-item {
    display: flex;
    align-items: center;
    height: 14.500px;
    padding-left: 4px;
}
.rail-item.on {
    padding-left: 2px;
    border-left: 2px solid #f2c811;
}
.rail-item svg {
    width: 7px;
    height: 7px;
}
.canvas-col {
    flex: none;
    width: 543px;
}
.canvas {
    height: 299px;
    padding-left: 7px;
    background-color: #ffffff;
}
.report {
    width: 530px;
    height: 298px;
    border: 1px dashed #a5a5a5;
    border-top: 0;
    background-color: #f2f2f2;
}
.report-title {
    height: 22px;
    margin-bottom: 4px;
    padding-left: 1px;
    background-color: #ffffff;
    font-size: 10.400px;
    letter-spacing: -0.260px;
    line-height: 20px;
    color: #3c3c3c;
}
.tiles {
    display: grid;
    grid-template-columns: 152px 182px 187px;
    grid-template-rows: 130px 138px;
    gap: 3px;
}
.kpis {
    display: grid;
    grid-template-columns: 76px 73px;
    grid-template-rows: 45px 40px 37px;
    gap: 4px 3px;
}
.kpi {
    display: flex;
    flex-direction: column;
    align-items: center;
    justify-content: center;
    background-color: #ffffff;
    font-size: 6.400px;
    line-height: 10px;
    color: #b0b0b0;
}
.kpi.full {
    grid-column: 1 / 3;
}
.kpi b {
    font-family: Roboto, sans-serif;
    font-size: 13.200px;
    letter-spacing: -0.250px;
    line-height: 18px;
    font-weight: 500;
    color: #3a3a3a;
}
.tile {
    width: 100%;
    height: 100%;
    background-color: #ffffff;
}
.tile.picked {
    outline: 1px solid #b9b9b9;
    outline-offset: -1px;
}
.tile text {
    font-family: "Open Sans", sans-serif;
}
.sheet-tabs {
    display: flex;
    height: 14px;
    padding-left: 15px;
    background-color: #f3f2f1;
    font-size: 4.300px;
    line-height: 12px;
    text-align: center;
    white-space: nowrap;
}
.canvas-col .sheet-tabs {
    padding-left: 0;
}
.sheet-nav {
    width: 14px;
    color: #888888;
}
.sheet.first {
    width: 37px;
}
.sheet.second {
    width: 87px;
}
.sheet.selected {
    background-color: #ffffff;
    border-bottom: 1px solid #e8c224;
    font-weight: 600;
    letter-spacing: -0.050px;
    color: #222222;
}
.sheet-add {
    width: 14px;
    background-color: #f2c811;
    font-size: 7px;
}
.sheet-tabs.cut {
    width: 703px;
    height: 11px;
    border-right: 1px solid #b5b5b5;
    border-bottom: 1px solid #dddddd;
    font-family: "Open Sans", sans-serif;
    line-height: 7px;
    color: #333333;
}
.sheet-tabs.cut .selected,
.sheet-tabs.cut .sheet-add {
    height: 9px;
}

/* Side panes */
.filters {
    display: flex;
    flex-direction: column;
    align-items: center;
    flex: none;
    width: 12px;
    height: 300px;
    padding-top: 5px;
    border-left: 1px solid #e6e6e6;
    background-color: #ffffff;
}
.filters .arrow {
    width: 4px;
    height: 6px;
}
.filters .cone {
    width: 5px;
    height: 6px;
    margin: 11px 0 4px;
}
.filters span {
    writing-mode: vertical-rl;
    font-size: 5.500px;
    font-weight: 600;
}
.visuals {
    flex: none;
    width: 67px;
    border-right: 1px solid #e1e0df;
}
.pane-head {
    display: flex;
    justify-content: space-between;
    align-items: center;
    height: 18px;
    padding: 0 4px 0 5px;
    font-size: 5.500px;
    font-weight: 600;
}
.pane-head svg {
    width: 4px;
    height: 6px;
}
.picker {
    display: grid;
    grid-template-columns: repeat(6, 6.500px);
    grid-auto-rows: 6.300px;
    gap: 2.400px 3.700px;
    padding: 0 0 0 3px;
}
.picker svg {
    width: 6.500px;
    height: 6.500px;
}
.picker .chosen {
    background-color: #b9b9b9;
    outline: 1px solid #777777;
}
.modes {
    display: flex;
    height: 13px;
    margin-top: 2px;
    padding-left: 5px;
    border-top: 1px solid #e8e7e6;
}
.modes span {
    display: flex;
    justify-content: center;
    align-items: center;
    width: 14.500px;
}
.modes .on {
    border-bottom: 1px solid #e8c224;
}
.modes svg {
    width: 8px;
    height: 8px;
}
.pane-search {
    display: flex;
    align-items: center;
    gap: 3px;
    width: 61px;
    height: 10px;
    margin: 2px 0 5px 2px;
    padding-left: 4px;
    background-color: #ffffff;
    font-size: 4.800px;
    color: #555555;
}
.pane-search svg {
    width: 6px;
    height: 6px;
}
.pane-search.boxed {
    width: 63px;
    height: 11px;
    margin: -1px 0 4px 1px;
    border: 1px solid #a9a9a9;
}
.setting {
    display: grid;
    grid-template-columns: 7px 26px 8px 11px;
    align-items: center;
    height: 13.170px;
    margin: 0 2px;
    padding-left: 1px;
    border-bottom: 1px solid #e4e3e2;
    font-size: 4.300px;
}
.setting svg {
    width: 5px;
    height: 4px;
}
.switch {
    display: flex;
    align-items: center;
    height: 4px;
    background: linear-gradient(#555555, #555555) center / 100% 1px no-repeat;
}
.switch::after {
    content: "";
    width: 4px;
    height: 4px;
    border: 1px solid #555555;
    border-radius: 50%;
    background-color: #f3f2f1;
}
.switch.on {
    justify-content: flex-end;
}
.switch.on::after {
    background-color: #555555;
}
.fields {
    width: 65px;
}
.field {
    display: flex;
    align-items: center;
    height: 8.900px;
    padding-left: 4px;
    font-size: 4.300px;
}
.field svg {
    width: 3px;
    height: 5px;
}
.field i {
    width: 5px;
    height: 5px;
    margin: 0 2px 0 1px;
    border: 1px solid #777777;
    background: linear-gradient(#888888, #888888) center / 100% 1px no-repeat;
}
.field i.calc {
    border-right-color: #f2b900;
    border-bottom-color: #f2b900;
    box-shadow: 1px 1px 0 0 #f2b900;
}

/* Cookie notice */
.cookies {
    display: flex;
    justify-content: space-between;
    flex: none;
    height: 53px;
    border-top: 1px solid #dedede;
    border-bottom: 1px solid #e8e8e8;
    background-color: #ffffff;
    font-family: Roboto, sans-serif;
    overflow: hidden;
}
.cookies p {
    flex: none;
    margin: 6px 0 0;
    font-size: 12.460px;
    line-height: 18.500px;
    white-space: nowrap;
    color: #44546a;
}
.cookies a {
    text-decoration: underline;
}
.cookies button {
    flex: none;
    width: 140px;
    height: 39px;
    margin: 6px -111px 0 0;
    padding: 0 0 0 12px;
    border: 1px solid #dddddd;
    border-bottom: 2px solid #cccccc;
    border-radius: 3px;
    background-color: #f3f3f3;
    font-family: Roboto, sans-serif;
    font-size: 14.500px;
    letter-spacing: 0.800px;
    text-align: left;
    white-space: nowrap;
    color: #44546a;
}
.page-end {
    flex: 1;
    padding: 0 50px 0 33px;
    background-color: #f5f5f5;
}
.page-end div {
    height: 100%;
    background-color: #ffffff;
}

/* Taskbar */
.taskbar {
    display: flex;
    flex: none;
    height: 42px;
    background: linear-gradient(to right, #21383f 18%, #20363f 55%, #1b2942 80%, #1c2b42);
    border-top: 1px solid #6f7c80;
}
.search-box {
    display: flex;
    align-items: center;
    justify-content: space-between;
    width: 184px;
    padding-right: 5px;
    background-color: #f2f2f2;
    font-size: 14.500px;
    color: #3a3a3a;
}
.simavi {
    display: flex;
    align-items: center;
    width: 75px;
    height: 33px;
    padding-left: 4px;
    border-radius: 5px;
    background-color: #0878b0;
}
.simavi b {
    width: 67px;
    height: 10px;
    line-height: 10px;
    background-color: #ffffff;
    font-family: "Liberation Sans", sans-serif;
    font-size: 12.500px;
    letter-spacing: -0.300px;
    color: #0f6ca5;
}
.simavi i {
    font-style: normal;
    color: #e0622f;
}
.apps {
    display: flex;
    margin-left: 1.500px;
}
.app {
    display: flex;
    justify-content: center;
    align-items: center;
    width: 52.100px;
    height: 41px;
}
.app svg {
    width: 25px;
    height: 26px;
}
.app.active {
    background-color: #4c5d65;
    border-bottom: 2px solid #76b9ed;
}
.app.open {
    background: linear-gradient(#76b9ed, #76b9ed) center bottom / 43px 2px no-repeat;
}
.vx {
    fill: #ffffff;
    font-family: "Open Sans", sans-serif;
    font-weight: bold;
    font-style: italic;
}
.weather {
    display: flex;
    align-items: center;
    gap: 9px;
    margin-left: 98px;
    font-size: 14px;
    white-space: nowrap;
    color: #ffffff;
}
.weather svg {
    width: 25px;
    height: 26px;
}
.tray {
    display: flex;
    align-items: center;
    gap: 8.800px;
    margin: 0 9px 0 auto;
}
```
FILE: script.js
```js
const teal = '#01b8aa';
const dark = '#374649';
const purple = '#744f73';

function text(x, y, s, opts = {}) {
    const size = opts.size || 4.3;
    const fit = opts.w ? ` textLength="${opts.w}" lengthAdjust="spacingAndGlyphs"` : '';
    const turn = opts.turn ? ` transform="rotate(${opts.turn} ${x} ${y})"` : '';
    return `<text x="${x}" y="${y}" font-size="${size}" fill="${opts.fill || '#777'}" text-anchor="${opts.at || 'start'}"${fit}${turn}>${s}</text>`;
}
function rect(x, y, w, h, fill, rx = 0) {
    return `<rect x="${x}" y="${y}" width="${w}" height="${h}" fill="${fill}" rx="${rx}"/>`;
}
function gridline(x1, y1, x2, y2) {
    return `<path d="M${x1} ${y1}L${x2} ${y2}" stroke="#e9e9e9" stroke-width=".7"/>`;
}
function tag(cx, cy, w, s, fill) {
    return rect(cx - w / 2, cy - 3.2, w, 6.4, fill, 1) + text(cx, cy + 1.5, s, { fill: '#fff', at: 'middle', size: 4.2 });
}
function put(id, markup) {
    document.getElementById(id).innerHTML = markup;
}

// Total steps and week over week change
let week = text(320, 322, 'Total Steps and WoW % Chg by Week', { size: 5, w: 82, fill: '#333' });
week += `<circle cx="322.700" cy="330.600" r="2" fill="${teal}"/>` + text(326, 332.3, 'Total Steps', { w: 20 });
week += `<circle cx="350.500" cy="330.600" r="2" fill="${purple}"/>` + text(353.5, 332.3, 'WoW % Chg', { w: 24 });
week += gridline(340, 340, 486, 340) + gridline(340, 386.5, 486, 386.5) + gridline(340, 433.5, 486, 433.5);
week += text(336, 341.5, '100,000', { at: 'end', w: 16 }) + text(336, 388, '50,000', { at: 'end', w: 13 }) + text(336, 435, '0', { at: 'end' });
week += text(488, 341.5, '200%', { w: 10 }) + text(488, 404, '0%', { w: 6 });
[[340, 405, '18'], [378, 355.5, '19'], [415.5, 380, '20'], [453.5, 396.5, '21']].forEach(([x, y, name]) => {
    week += rect(x, y, 30.3, 433.5 - y, teal) + text(x + 15, 440, name, { at: 'middle' });
});
week += '<path d="M397 352L430 412L469 412.500" fill="none" stroke="#5d4a60" stroke-width=".9"/>';
week += tag(355, 399.8, 18, '30,128', '#444') + tag(393, 350, 18, '82,916', '#444');
week += tag(430.8, 374.3, 18, '57,105', '#444') + tag(468.5, 391.3, 18, '39,122', '#444');
week += tag(393, 341.8, 26, '+175.21%', purple) + tag(430.8, 406.3, 26, '-31.13%', purple) + tag(469, 418.2, 26, '-31.49%', purple);
week += '<path d="M472 319.500h5l-2 2.500v2.500l-1-.7V322zM483 319.500h4.500v4H483zM484.500 321.500h4v3h-4z" fill="none" stroke="#777" stroke-width=".6"/><path d="M493 321.500h5" stroke="#777" stroke-dasharray="1 1"/>';
week += '<path d="M318 320v-4h4M407 316.300h5M496 316h4v4M318 442v4h4M407 445.700h5M496 446h4v-4M318.300 378v5M499.700 378v5" fill="none" stroke="#777" stroke-width="1.300"/>';
put('weekChart', week);

// Share of steps per weekday
let day = text(506, 322, '% of Total Steps by Day Name and Activity', { size: 5, w: 93, fill: '#333' });
day += text(506, 332.3, 'Activity', { w: 15, fill: '#444' });
day += `<circle cx="526.500" cy="330.600" r="2" fill="${teal}"/>` + text(529.5, 332.3, 'Running', { w: 16 });
day += `<circle cx="549.500" cy="330.600" r="2" fill="${dark}"/>` + text(552.5, 332.3, 'Walking', { w: 16 });
[[534, '0%'], [577, '10%'], [620, '20%'], [662.5, '30%']].forEach(([x, name]) => {
    day += gridline(x, 340, x, 433) + text(x, 440, name, { at: 'middle' });
});
[
    ['Sunday', 588, '12.68%', 616, '6.50%'],
    ['Monday', 534, '', 586.5, '12.33%'],
    ['Tuesday', 602, '15.85%', 602, ''],
    ['Wednesday', 534, '', 563.5, '6.87%'],
    ['Thursday', 555, '4.80%', 557.7, ''],
    ['Friday', 550, '3.67%', 571.5, '5.13%'],
    ['Saturday', 648.5, '26.74%', 668.5, '4.69%']
].forEach(([name, a, aText, b, bText], i) => {
    const y = 344.2 + i * 12.5;
    day += text(531, y + 6.4, name, { at: 'end' });
    day += rect(534, y, a - 534, 9.8, teal) + rect(a, y, b - a, 9.8, dark);
    day += text((534 + a) / 2, y + 6.4, aText, { at: 'middle', fill: '#fff', size: 4.2 });
    day += text((a + b) / 2, y + 6.4, bText, { at: 'middle', fill: '#fff', size: 4.2 });
});
put('dayChart', day);

// Donut
put('activityChart',
    text(165, 455, 'Total Steps by Activity', { size: 5, w: 47, fill: '#333' }) +
    `<circle cx="238.400" cy="521" r="35" fill="none" stroke="${teal}" stroke-width="17"/>` +
    `<circle cx="238.400" cy="521" r="35" fill="none" stroke="${dark}" stroke-width="17" pathLength="100" stroke-dasharray="36.240 63.760" transform="rotate(139.500 238.400 521)"/>` +
    text(206, 479, 'Walking', { at: 'end', size: 4 }) + text(206, 484, '75,841 (36.24%)', { at: 'end', size: 4, w: 31 }) +
    text(252, 571, 'Running 133,430 (63.76%)', { size: 4, w: 50 }) +
    '<path d="M207.500 481h5l2 3M244 566v3.500h6" fill="none" stroke="#bbb" stroke-width=".6"/>');

function dates(x0, step, y) {
    let out = '';
    for (let i = 1; i <= 18; i++) {
        out += text(x0 + (i - 1) * step, y, String(i).padStart(2, '0') + '.05.2021', { at: 'end', size: 4, w: 21, turn: -36 });
    }
    return out;
}

// Steps per day
const steps = [[0, 476], [1, 522], [2, 542.3], [3, 544.7], [4, 544.7], [5, 535.3], [6, 533.3], [7, 488.7], [8, 529.7], [9, 549.7],
    [10, 525.3], [11, 543], [12, 560.7], [13, 542.3], [14, 536.3], [15, 525.3], [16, 527.3], [17, 527.7]];
let date = text(320.5, 455, 'Total Steps by Date', { size: 5, w: 42, fill: '#333' });
[[476.5, '30,000'], [506, '20,000'], [535.5, '10,000'], [565, '0']].forEach(([y, name]) => {
    date += gridline(340, y, 498, y) + text(335, y + 1.5, name, { at: 'end' });
});
date += `<polyline points="${steps.map(([i, y]) => (342.7 + i * 8.98) + ',' + y).join(' ')}" fill="none" stroke="${teal}" stroke-width="1.100"/>`;
[[347, 473, '30,128'], [352, 519.3, '14,494'], [361, 539, '7,777'], [369.5, 552, '6,861'], [379, 541, '7,107'], [388, 532.3, '10,084'],
    [397, 540.5, '10,813'], [405.5, 485.5, '25,861'], [415, 526.5, '12,846'], [423.5, 556, '5,309'], [432.5, 522, '13,567'], [442, 540.5, '7,779'],
    [451, 558, '1,647'], [460, 539.5, '7,677'], [468, 533, '9,823'], [475, 529.5, '12,762'], [477.5, 522, '13,488'], [491, 534.5, '12,752']
].forEach(([x, y, s]) => {
    date += text(x, y, s, { at: 'middle', size: 4.2, fill: '#555' });
});
date += dates(342, 8.98, 569);
put('dateChart', date);

// Running total
const total = [552.7, 547, 544.3, 541, 538.3, 534.3, 529.7, 518.7, 513.3, 511.7, 506, 503, 502, 499, 495, 489, 483.7, 478.3];
const line = total.map((y, i) => (529.3 + i * 9.14) + ' ' + y).join('L');
let sum = text(506.5, 455, 'Total Steps (Cumulative) by Date', { size: 5, w: 71, fill: '#333' });
[[482.5, '200,000'], [524, '100,000'], [565.5, '0']].forEach(([y, name]) => {
    sum += gridline(526, y, 686, y) + text(522, y + 1.5, name, { at: 'end' });
});
sum += `<path d="M${line}V565.500H529.300z" fill="#9ae3dd"/><path d="M${line}" fill="none" stroke="#2ba79f"/>`;
sum += dates(528.5, 9.14, 569.5);
put('totalChart', sum);

// Visual picker
const icons = ['hbar', 'vbar', 'hbar', 'vbar', 'hbar', 'vbar', 'line', 'area', 'area', 'vbar', 'area', 'map',
    'vbar', 'funnel', 'line', 'pie', 'ring', 'table', 'globe', 'map', 'gauge', 'card', 'card', 'kpi',
    'table', 'table', 'table', 'r', 'py', 'line', 'tree', 'chat', 'doc', 'arc', 'diamond', 'dots'];
put('picker', icons.map((name, i) => `<svg${i === 9 ? ' class="chosen"' : ''}><use href="#v-${name}"/></svg>`).join(''));

// Format settings
const settings = [['General'], ['Legend', 'On'], ['X axis', 'On'], ['Y axis', 'On'], ['Zoom sl...', 'Off'], ['Data colors'],
    ['Data lab...', 'On'], ['Shapes'], ['Plot area'], ['Title', 'On'], ['Backgro...', 'On'], ['Lock asp...', 'Off'],
    ['Border', 'Off'], ['Shadow', 'Off'], ['Tooltip', 'On'], ['Visual he...', 'On']];
put('settings', settings.map(([name, state]) =>
    `<div class="setting"><svg><use href="#chev-down"/></svg><span>${name}</span>` +
    (state ? `<span>${state}</span><span class="switch ${state.toLowerCase()}"></span>` : '') + '</div>').join(''));
```
